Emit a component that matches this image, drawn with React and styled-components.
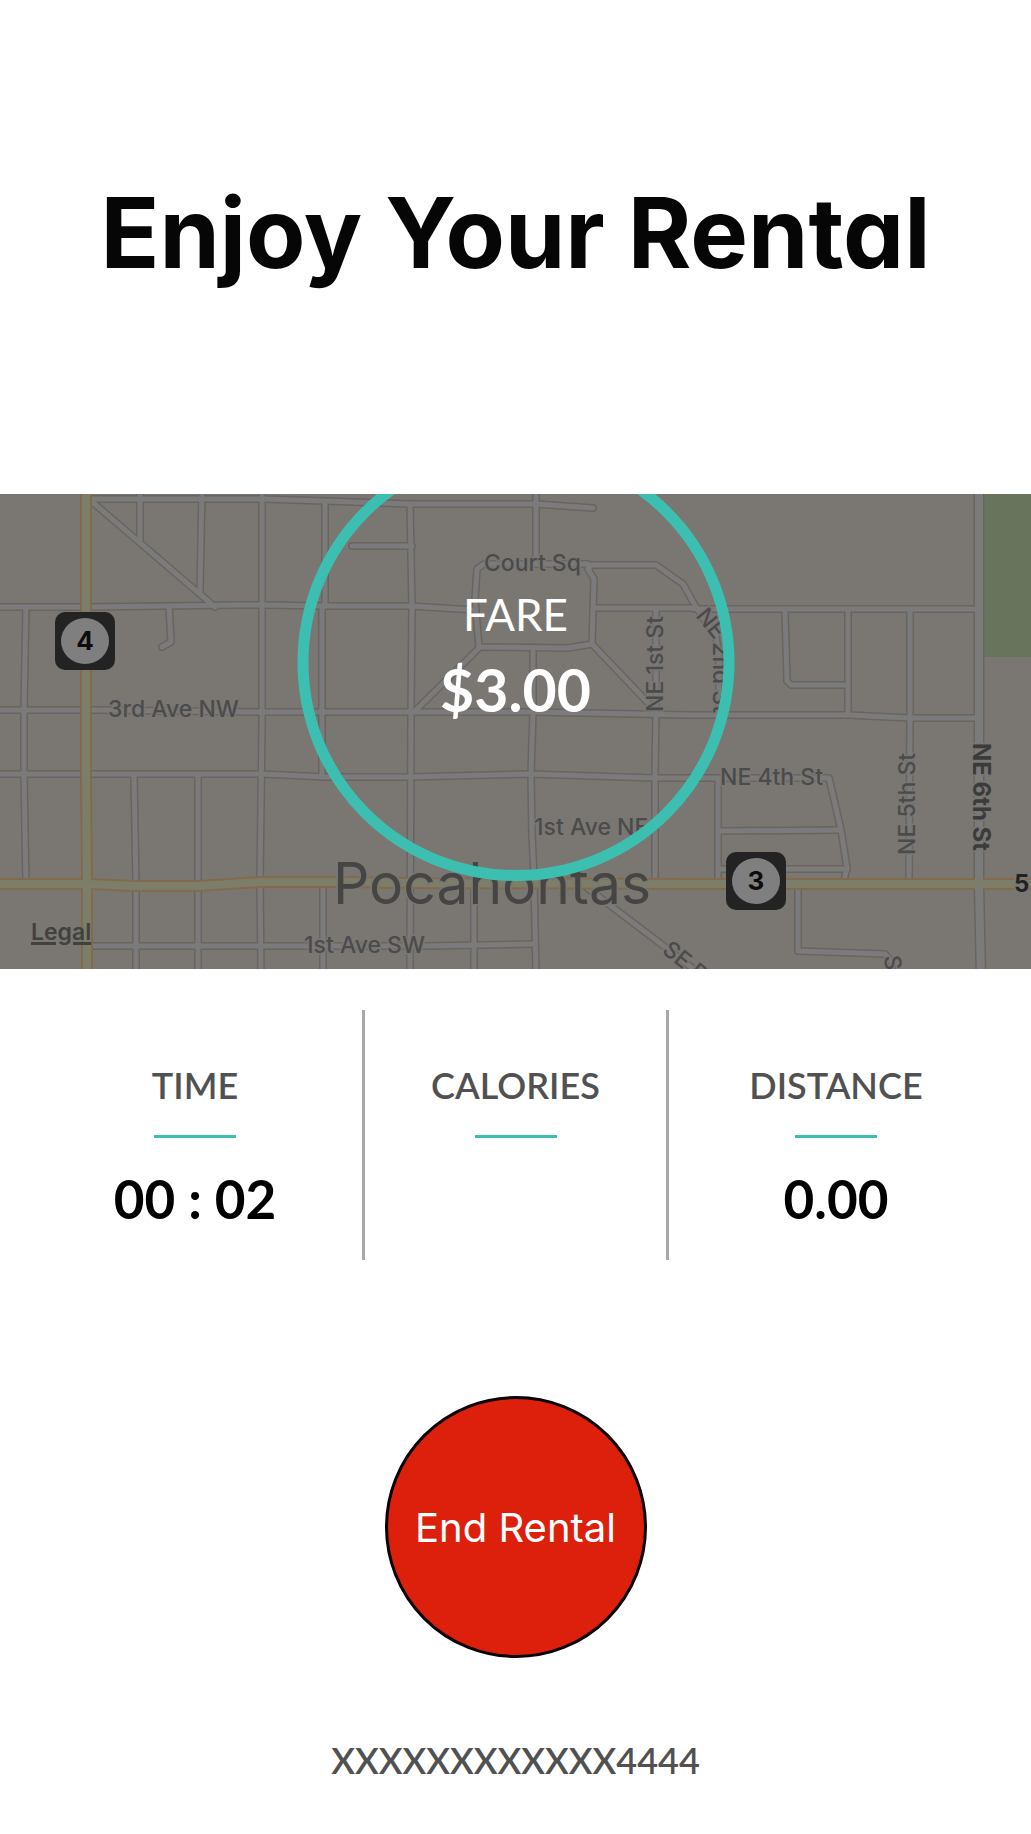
import React from 'react';
import styled, { createGlobalStyle } from 'styled-components';

const teal = '#3cbfb0';

const GlobalStyle = createGlobalStyle`
  * { box-sizing: border-box; }
  body { margin: 0; background: #fff; }
`;

const Screen = styled.main`
  display: flex;
  flex-direction: column;
  align-items: center;
  background: #fff;
  font-family: Lato, 'Open Sans', sans-serif;
`;

const Header = styled.header`
  padding: 173px 16px 201px;
`;

const Title = styled.h1`
  margin: 0;
  color: #060606;
  font: 700 97px/120px Inter, sans-serif;
  font-feature-settings: 'cv11';
  text-align: center;
`;

const MapPanel = styled.section`
  position: relative;
  width: 100%;
  height: 475px;
  overflow: hidden;
  background: #7a7772;
`;

const MapDrawing = styled.svg`
  display: block;
  width: 100%;
  height: 100%;

  text {
    font-family: Inter, sans-serif;
    font-size: 23px;
    font-weight: 500;
    fill: #4b4b4c;
    stroke: #7a7773;
    stroke-width: 3px;
    stroke-linejoin: round;
    paint-order: stroke;
  }
`;

const Roads = styled.g`
  fill: none;
  stroke: ${(p) => p.$color};
  stroke-width: ${(p) => p.$width}px;
  stroke-linejoin: round;
  stroke-linecap: round;
`;

const MainRoadName = styled.text`
  && {
    font-size: 24px;
    font-weight: 700;
    fill: ${(p) => p.$color || '#3b3b3c'};
  }
`;

const CityName = styled.text`
  && {
    font-size: 57px;
    font-weight: 400;
    fill: #464543;
  }
`;

const ShieldNumber = styled.text`
  && {
    font-size: 26px;
    font-weight: 700;
    fill: #0c0c0c;
    stroke: none;
  }
`;

const LegalLink = styled.a`
  position: absolute;
  left: 31px;
  bottom: 23px;
  color: #41413f;
  font: 600 23px/28px Inter, sans-serif;
  text-decoration: underline;
  text-decoration-thickness: 3px;
  text-underline-offset: 2px;
`;

const FareRing = styled.div`
  position: absolute;
  top: -50px;
  left: 50%;
  transform: translateX(-50%);
  width: 437px;
  height: 437px;
  padding-top: 135px;
  border: 11px solid ${teal};
  border-radius: 50%;
  display: flex;
  flex-direction: column;
  align-items: center;
  gap: 20px;
  color: #fff;
`;

const FareLabel = styled.span`
  font-size: 44px;
  line-height: 48px;
`;

const FareAmount = styled.strong`
  font-size: 59px;
  line-height: 64px;
  font-weight: 700;
`;

const Stats = styled.dl`
  align-self: stretch;
  display: grid;
  grid-template-columns: 334fr 307fr 334fr;
  margin: 41px 0 0;
  padding: 0 28px;
`;

const Stat = styled.div`
  display: flex;
  flex-direction: column;
  align-items: center;
  min-height: 250px;
  padding-top: 53px;

  &:nth-child(2) {
    border: solid #a8a8a8;
    border-width: 0 3px;
  }
`;

const StatLabel = styled.dt`
  display: flex;
  flex-direction: column;
  align-items: center;
  gap: 28px;
  color: #515151;
  font-size: 36px;
  line-height: 44px;
  font-weight: 600;

  &::after {
    content: '';
    width: 82px;
    height: 3px;
    background: ${teal};
  }
`;

const StatValue = styled.dd`
  margin: 31px 0 0;
  color: #000;
  font-size: 53px;
  line-height: 60px;
  font-weight: 700;
`;

const EndButton = styled.button`
  width: 262px;
  height: 262px;
  margin-top: 136px;
  padding: 2px 0 0;
  border: 3px solid #0a0000;
  border-radius: 50%;
  background: #dd200c;
  color: #fff;
  font: 400 40px/48px Inter, sans-serif;
  cursor: pointer;
`;

const CardNumber = styled.p`
  margin: 80px 0 0;
  padding-bottom: 52px;
  color: #515151;
  font-size: 36px;
  line-height: 44px;
  font-weight: 600;
`;

const streets = [
  'M86 5H263L325 7L410 10H535L593 14',
  'M-5 113L86 113L240 111H263L325 112H410L475 116',
  'M595 114H690L697 115H979',
  'M-5 216H100L263 218H530L690 221H848L910 224H979',
  'M-5 280H263L325 283H410L530 280L655 284H829L841 336L847 374L843 390',
  'M90 452H300L428 452L535 450',
  'M26 113L24 216V280L26 390',
  'M140 -5V48',
  'M202 -5L200 98',
  'M262 -5V232L260 386L261 480',
  'M325 7V112L322 112V283',
  'M410 10L412 112L411 218L410 480',
  'M352 52H412',
  'M536 -5V70',
  'M588 70H484L477 75L475 105L479 153L568 154L592 150L594 85L588 75L592 71H656L683 90L697 115',
  'M479 154L414 218',
  'M592 150L652 213',
  'M533 154V218L531 280L532 340L534 384L536 480',
  'M656 115V218L655 283V390',
  'M169 112L171 148L162 153',
  'M90 6L215 113',
  'M697 115L716 142L719 165V221',
  'M785 115L787 187L791 191H848',
  'M848 115V220',
  'M910 115V224L909 390',
  'M718 284V390',
  'M718 337L840 336',
  'M718 375H847',
  'M798 390V457L885 460L892 468V480',
  'M474 390V480',
  'M134 281L136 390V480',
  'M198 281V480',
  'M323 390V480',
  'M586 393L665 453L700 480',
];
const avenue = ['M979 -8V390L981 483'];
const highways = ['M86 -8V280L87 390V483', 'M-8 390H88L135 392H198L260 388H350L400 389L690 390H1040'];

const shields = [
  { x: 55, y: 118, n: '4' },
  { x: 726, y: 358, n: '3' },
];

const lines = (list) => list.map((d) => <path key={d} d={d} />);

function TownMap() {
  return (
    <MapDrawing viewBox="0 0 1031 475" preserveAspectRatio="xMidYMid slice" role="img" aria-label="Map of Pocahontas">
      <rect width="1031" height="475" fill="#7a7772" />
      <rect x="982" width="49" height="163" fill="#68755c" />
      <Roads $color="#6b645e" $width={8}>{lines(streets)}</Roads>
      <Roads $color="#6b645e" $width={11}>{lines(avenue)}</Roads>
      <Roads $color="#7b7b7c" $width={5}>{lines(streets)}</Roads>
      <Roads $color="#826b4c" $width={12}>{lines(highways)}</Roads>
      <Roads $color="#7b7b7c" $width={8}>{lines(avenue)}</Roads>
      <Roads $color="#7d7e6a" $width={8}>{lines(highways)}</Roads>

      <text x="484" y="77">Court Sq</text>
      <text x="108" y="223">3rd Ave NW</text>
      <text transform="translate(663 218) rotate(-90)">NE 1st St</text>
      <text transform="translate(695 122) rotate(51)">NE</text>
      <text transform="translate(713 148) rotate(90)">2nd St</text>
      <text x="720" y="291">NE 4th St</text>
      <text transform="translate(915 361) rotate(-90)">NE 5th St</text>
      <MainRoadName transform="translate(973 249) rotate(90)">NE 6th St</MainRoadName>
      <text x="534" y="341">1st Ave NE</text>
      <text x="304" y="459">1st Ave SW</text>
      <text transform="translate(661 458) rotate(39)">SE D</text>
      <text transform="translate(884 462) rotate(84)">S</text>
      <MainRoadName x="1014" y="398" $color="#222">5</MainRoadName>
      <CityName x="333" y="410">Pocahontas</CityName>

      {shields.map((s) => (
        <g key={s.n} transform={`translate(${s.x} ${s.y})`}>
          <rect width="60" height="58" rx="10" fill="#232323" />
          <ellipse cx="30" cy="29" rx="24" ry="23" fill="#7f7f7f" />
          <ShieldNumber x="30" y="38" textAnchor="middle">{s.n}</ShieldNumber>
        </g>
      ))}
    </MapDrawing>
  );
}

const stats = [
  { label: 'TIME', value: '00 : 02' },
  { label: 'CALORIES', value: '' },
  { label: 'DISTANCE', value: '0.00' },
];

export default function App() {
  return (
    <Screen>
      <GlobalStyle />
      <Header>
        <Title>Enjoy Your Rental</Title>
      </Header>
      <MapPanel>
        <TownMap />
        <LegalLink href="#legal">Legal</LegalLink>
        <FareRing>
          <FareLabel>FARE</FareLabel>
          <FareAmount>$3.00</FareAmount>
        </FareRing>
      </MapPanel>
      <Stats>
        {stats.map((s) => (
          <Stat key={s.label}>
            <StatLabel>{s.label}</StatLabel>
            <StatValue>{s.value}</StatValue>
          </Stat>
        ))}
      </Stats>
      <EndButton type="button">End Rental</EndButton>
      <CardNumber>XXXXXXXXXXXX4444</CardNumber>
    </Screen>
  );
}
